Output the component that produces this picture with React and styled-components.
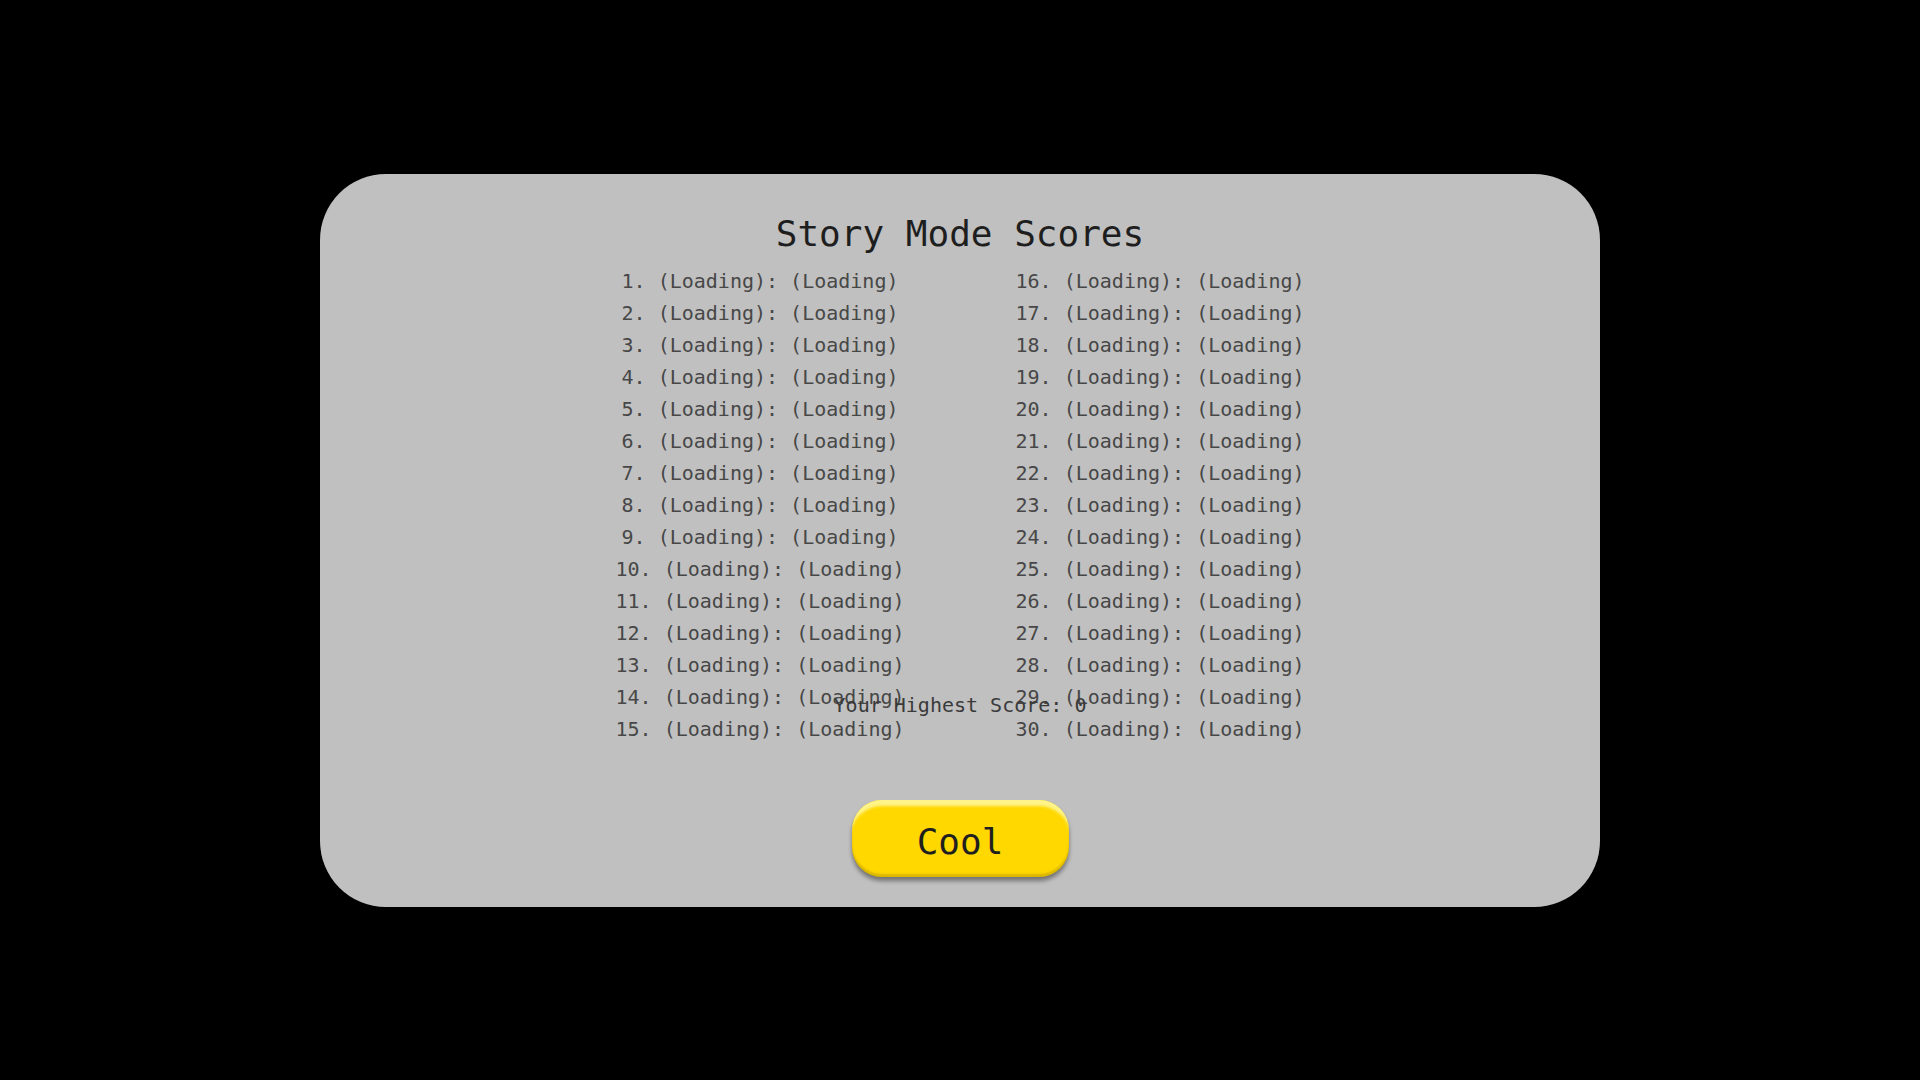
import styled, { createGlobalStyle } from "styled-components";

const GlobalStyle = createGlobalStyle`
  html, body {
    margin: 0;
    padding: 0;
    background: #000;
  }
  body {
    font-family: "DejaVu Sans Mono", "Liberation Mono", monospace;
  }
`;

const Screen = styled.div`
  width: 100vw;
  height: 100vh;
  display: flex;
  align-items: center;
  justify-content: center;
  background: #000;
`;

const Panel = styled.div`
  position: relative;
  width: 1280px;
  height: 733px;
  box-sizing: border-box;
  padding-top: 39px;
  background: #c0c0c0;
  border-radius: 66px;
  display: flex;
  flex-flow: column;
  align-items: center;
`;

const Title = styled.h1`
  margin: 0;
  font-size: 36px;
  font-weight: normal;
  line-height: 42px;
  color: #1e1e1e;
`;

const ScoreGrid = styled.div`
  margin-top: 10px;
  display: grid;
  grid-template-columns: 400px 400px;
  grid-auto-flow: column;
  grid-template-rows: repeat(15, 32px);
`;

const ScoreRow = styled.div`
  font-size: 20px;
  line-height: 32px;
  text-align: center;
  white-space: pre;
  color: #474747;
`;

const HighScore = styled.div`
  position: absolute;
  top: 515px;
  left: 0;
  right: 0;
  font-size: 20px;
  line-height: 32px;
  text-align: center;
  color: #3a3a3a;
`;

const CoolButton = styled.button`
  margin-top: 55px;
  width: 217px;
  height: 77px;
  border: none;
  border-radius: 30px;
  background: #ffd800;
  font-family: "DejaVu Sans Mono", "Liberation Mono", monospace;
  font-size: 36px;
  color: #1f1f1f;
  padding: 6px 0 0;
  cursor: pointer;
  box-shadow: inset 0 8px 3px -2px #fff48a, inset 0 -3px 2px rgba(150, 120, 0, 0.35),
    0 4px 4px rgba(0, 0, 0, 0.4);
`;

const scores = Array.from({ length: 30 }, (_, i) => ({
  rank: i + 1,
  name: "(Loading)",
  score: "(Loading)",
}));

export default function App() {
  return (
    <>
      <GlobalStyle />
      <Screen>
        <Panel>
          <Title>Story Mode Scores</Title>
          <ScoreGrid>
            {scores.map((s) => (
              <ScoreRow key={s.rank}>
                {s.rank}. {s.name}: {s.score}
              </ScoreRow>
            ))}
          </ScoreGrid>
          <HighScore>Your Highest Score: 0</HighScore>
          <CoolButton>Cool</CoolButton>
        </Panel>
      </Screen>
    </>
  );
}
